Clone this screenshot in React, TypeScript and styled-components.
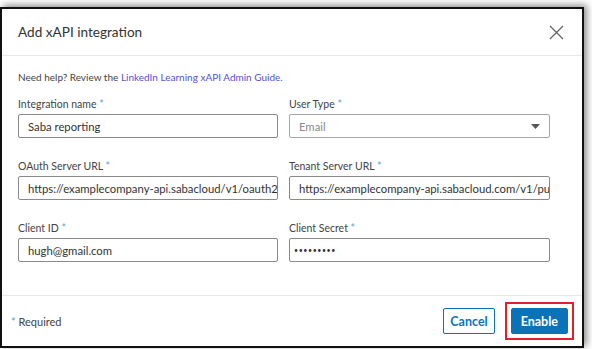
import styled, { createGlobalStyle } from 'styled-components'

const GlobalStyle = createGlobalStyle`
  html, body {
    margin: 0;
    padding: 0;
    background: #ffffff;
  }
  * {
    box-sizing: border-box;
  }
`

const Page = styled.div`
  width: 592px;
  height: 349px;
  overflow: hidden;
  padding-top: 7px;
  font-family: Lato, 'Open Sans', sans-serif;
  color: #333;
`

const Modal = styled.div`
  width: 584px;
  border: 2px solid #111;
  background: #fff;
  box-shadow: 3px -2px 7px rgba(0, 0, 0, 0.45);
  display: flex;
  flex-direction: column;
`

const Header = styled.div`
  height: 47px;
  border-bottom: 1px solid #e6e6e6;
  display: flex;
  align-items: center;
  justify-content: space-between;
  padding: 0 18px 0 16px;
`

const Title = styled.h2`
  margin: 0;
  font-size: 13.6px;
  font-weight: 400;
  color: #333;
`

const CloseButton = styled.button`
  width: 16px;
  height: 16px;
  padding: 0;
  border: none;
  background: none;
  display: flex;
  align-items: center;
  justify-content: center;
  cursor: pointer;
`

const Body = styled.div`
  padding: 13px 31px 33px 16px;
`

const Help = styled.p`
  margin: 0 0 11px;
  font-size: 10px;
  line-height: 16px;
  color: #444;
  a {
    color: #5750d0;
    text-decoration: none;
  }
`

const Grid = styled.div`
  display: grid;
  grid-template-columns: 260px 261px;
  column-gap: 11px;
  row-gap: 20px;
`

const Field = styled.div`
  display: flex;
  flex-direction: column;
`

const Label = styled.label`
  font-size: 10.5px;
  line-height: 16px;
  margin-bottom: 2px;
  color: #444;
  span {
    color: #5a9fe0;
  }
`

const Input = styled.div<{ $muted?: boolean }>`
  height: 24px;
  border: 1px solid ${(p) => (p.$muted ? '#a6a6a6' : '#8a8a8a')};
  border-radius: 2px;
  padding: 0 9px;
  display: flex;
  align-items: center;
  justify-content: space-between;
  font-size: 11.3px;
  color: ${(p) => (p.$muted ? '#8a8a8a' : '#333')};
  white-space: nowrap;
  overflow: hidden;
`

const Dots = styled.span`
  font-size: 7px;
  letter-spacing: 0.6px;
  color: #333;
  margin-left: -5px;
`

const Footer = styled.div`
  border-top: 1px solid #e6e6e6;
  padding: 6px 8px 6px 9px;
  display: flex;
  align-items: center;
  justify-content: space-between;
`

const Required = styled.span`
  font-size: 11px;
  color: #444;
  span {
    color: #5a9fe0;
  }
`

const Actions = styled.div`
  display: flex;
  align-items: center;
  gap: 10px;
`

const Highlight = styled.div`
  border: 2px solid #e0202a;
  padding: 4px;
  display: flex;
`

const Button = styled.button<{ $primary?: boolean }>`
  height: 26px;
  padding: 0 ${(p) => (p.$primary ? 9 : 6)}px;
  border-radius: 2px;
  border: 1px solid #0a73b8;
  background: ${(p) => (p.$primary ? '#0a73b8' : '#fff')};
  color: ${(p) => (p.$primary ? '#fff' : '#0a73b8')};
  font-family: inherit;
  font-size: 12.5px;
  font-weight: 700;
  cursor: pointer;
`

const fields = [
  { label: 'Integration name', value: 'Saba reporting' },
  { label: 'User Type', value: 'Email', select: true },
  { label: 'OAuth Server URL', value: 'https://examplecompany-api.sabacloud/v1/oauth2/token' },
  { label: 'Tenant Server URL', value: 'https://examplecompany-api.sabacloud.com/v1/public' },
  { label: 'Client ID', value: 'hugh@gmail.com' },
  { label: 'Client Secret', value: '•••••••••', secret: true },
]

const App = () => {
  return (
    <Page>
      <GlobalStyle />
      <Modal>
        <Header>
          <Title>Add xAPI integration</Title>
          <CloseButton aria-label="Close">
            <svg width="15" height="15" viewBox="0 0 15 15">
              <path d="M1 1L14 14M14 1L1 14" stroke="#666" strokeWidth="1.3" />
            </svg>
          </CloseButton>
        </Header>
        <Body>
          <Help>
            Need help? Review the <a href="#">LinkedIn Learning xAPI Admin Guide.</a>
          </Help>
          <Grid>
            {fields.map((f) => (
              <Field key={f.label}>
                <Label>
                  {f.label} <span>*</span>
                </Label>
                <Input $muted={f.select}>
                  {f.secret ? <Dots>{f.value}</Dots> : f.value}
                  {f.select && (
                    <svg width="9" height="5" viewBox="0 0 9 5">
                      <path d="M0 0H9L4.5 5Z" fill="#555" />
                    </svg>
                  )}
                </Input>
              </Field>
            ))}
          </Grid>
        </Body>
        <Footer>
          <Required>
            <span>*</span> Required
          </Required>
          <Actions>
            <Button>Cancel</Button>
            <Highlight>
              <Button $primary>Enable</Button>
            </Highlight>
          </Actions>
        </Footer>
      </Modal>
    </Page>
  )
}

export default App
